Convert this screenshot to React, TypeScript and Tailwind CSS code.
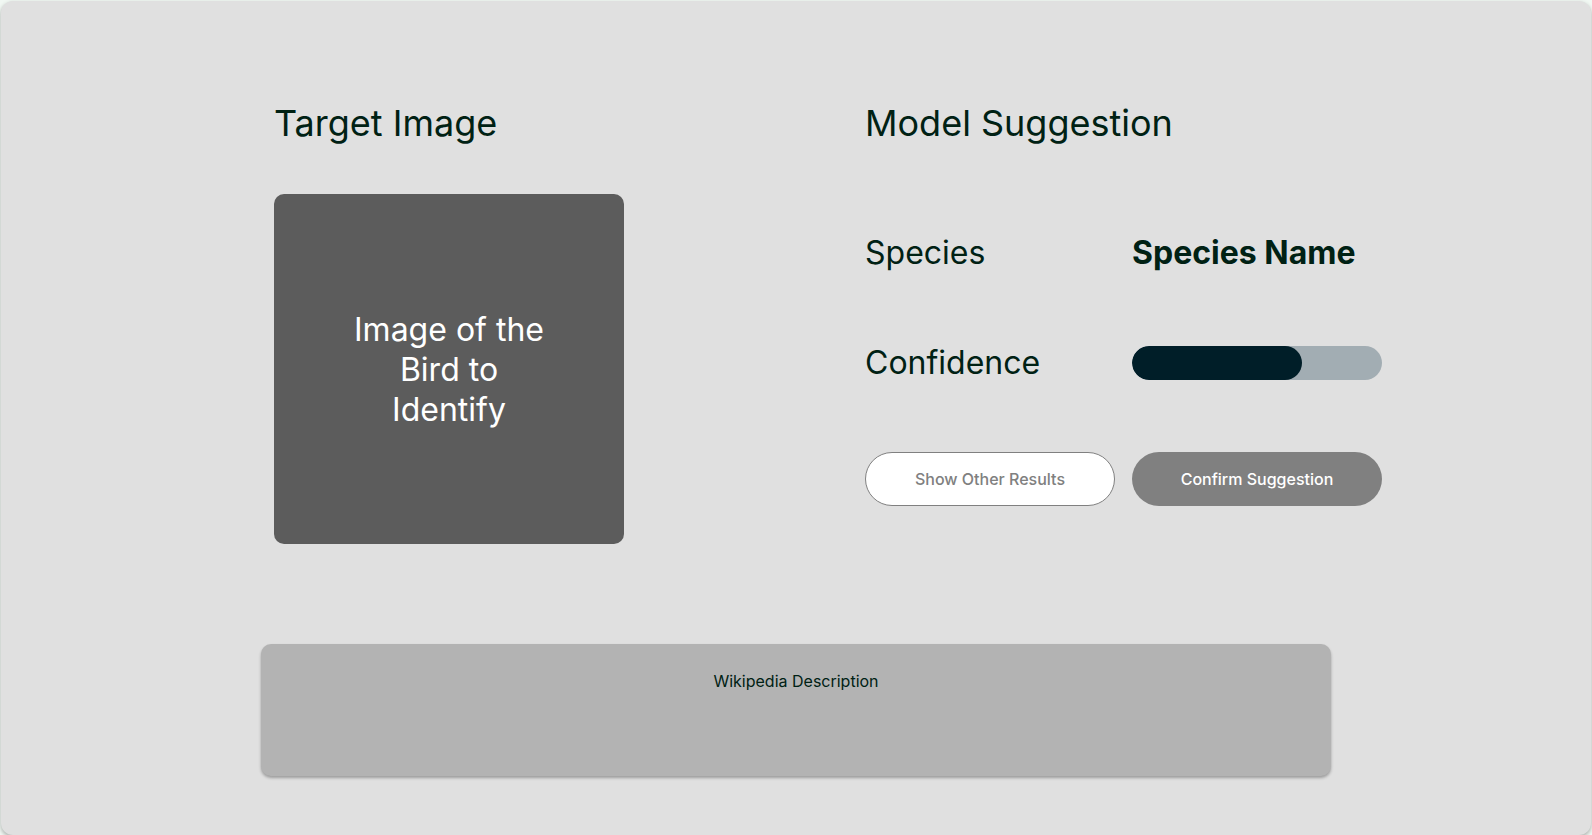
const confidence = 68;

function TargetImage() {
  return (
    <section className="flex w-[350px] flex-col gap-[49px]">
      <h2 className="text-[36px] leading-[44px]">Target Image</h2>
      <div className="flex aspect-square items-center justify-center rounded-[10px] bg-[#5c5c5c] px-[70px] pt-0.5">
        <p className="text-center text-[32px] leading-[40px] text-white">
          Image of the Bird to Identify
        </p>
      </div>
    </section>
  );
}

function ModelSuggestion() {
  return (
    <section className="flex w-[517px] flex-col">
      <h2 className="text-[36px] leading-[44px]">Model Suggestion</h2>
      <dl className="mt-[88px] grid grid-cols-2 items-center gap-x-[17px] gap-y-[70px] text-[32px] leading-[40px]">
        <dt>Species</dt>
        <dd className="font-bold whitespace-nowrap">Species Name</dd>
        <dt id="confidence-label">Confidence</dt>
        <dd>
          <div
            role="progressbar"
            aria-labelledby="confidence-label"
            aria-valuemin={0}
            aria-valuemax={100}
            aria-valuenow={confidence}
            className="h-[34px] overflow-hidden rounded-full bg-[#a2adb3]"
          >
            <div
              className="h-full rounded-full bg-[#001e28]"
              style={{ width: `${confidence}%` }}
            />
          </div>
        </dd>
      </dl>
      <div className="mt-[69px] grid grid-cols-2 gap-[17px] text-[16px] leading-6 font-medium">
        <button
          type="button"
          className="h-[54px] rounded-full border border-[#808080] bg-white text-[#808080]"
        >
          Show Other Results
        </button>
        <button type="button" className="h-[54px] rounded-full bg-[#808080] text-white">
          Confirm Suggestion
        </button>
      </div>
    </section>
  );
}

export default function App() {
  return (
    <div className="flex min-h-screen flex-col bg-[#f1f8f3] px-px pt-px font-['Inter',sans-serif] text-[#002114]">
      <main className="flex-1 rounded-xl bg-[#e0e0e0] pt-[100px] pb-14 shadow-[0_2px_4px_rgba(0,0,0,0.3)]">
        <div className="mx-auto flex max-w-[1172px] flex-wrap justify-between gap-y-16 pl-16">
          <TargetImage />
          <ModelSuggestion />
        </div>
        <section className="mx-auto mt-[100px] min-h-[132px] max-w-[1070px] rounded-[10px] bg-[#b3b3b3] pt-[25px] shadow-[0_2px_3px_rgba(0,0,0,0.3)]">
          <h3 className="text-center text-[16px] leading-6">Wikipedia Description</h3>
        </section>
      </main>
    </div>
  );
}
